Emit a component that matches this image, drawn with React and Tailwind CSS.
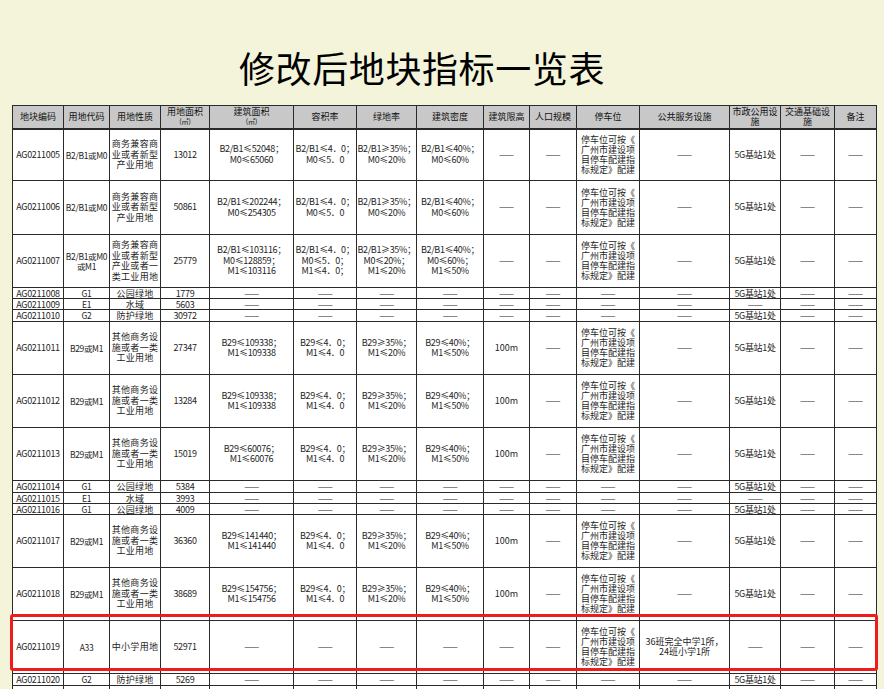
import React from "react";

const P = ["停车位可按《", "广州市建设项", "目停车配建指", "标规定》配建"];
const D = "——";

const cols = [51, 46, 51, 49, 84, 63, 60, 67, 46, 47, 63, 90, 51, 54, 42];

const headers = [
  ["地块编码"],
  ["用地代码"],
  ["用地性质"],
  ["用地面积", "(㎡)"],
  ["建筑面积", "(㎡)"],
  ["容积率"],
  ["绿地率"],
  ["建筑密度"],
  ["建筑限高"],
  ["人口规模"],
  ["停车位"],
  ["公共服务设施"],
  ["市政公用设", "施"],
  ["交通基础设", "施"],
  ["备注"],
];

const big = (id, code, nature, area, build, far, green, density, height, extra = {}) => ({
  id, code, nature, area, build, far, green, density, height,
  pop: D, parking: P, pub: D, muni: "5G基站1处", traffic: D, note: D, h: 53, ...extra,
});

const small = (id, code, nature, area, muni, h = 11) => ({
  id, code: [code], nature: [nature], area, build: [D], far: [D], green: [D], density: [D],
  height: D, pop: D, parking: [D], pub: D, muni, traffic: D, note: D, h, small: true,
});

const b29 = ["其他商务设", "施或者一类", "工业用地"];

const rows = [
  big("AG0211005", ["B2/B1或M0"], ["商务兼容商", "业或者新型", "产业用地"], "13012",
    ["B2/B1≤52048；", "M0≤65060"], ["B2/B1≤4．0；", "M0≤5．0"], ["B2/B1≥35%；", "M0≤20%"], ["B2/B1≤40%；", "M0≤60%"], D, { h: 52 }),
  big("AG0211006", ["B2/B1或M0"], ["商务兼容商", "业或者新型", "产业用地"], "50861",
    ["B2/B1≤202244；", "M0≤254305"], ["B2/B1≤4．0；", "M0≤5．0"], ["B2/B1≥35%；", "M0≤20%"], ["B2/B1≤40%；", "M0≤60%"], D, { h: 54 }),
  big("AG0211007", ["B2/B1或M0", "或M1"], ["商务兼容商", "业或者新型", "产业或者一", "类工业用地"], "25779",
    ["B2/B1≤103116；", "M0≤128859；", "M1≤103116"], ["B2/B1≤4．0；", "M0≤5．0；", "M1≤4．0；"],
    ["B2/B1≥35%；", "M0≤20%；", "M1≤20%"], ["B2/B1≤40%；", "M0≤60%；", "M1≤50%"], D),
  small("AG0211008", "G1", "公园绿地", "1779", "5G基站1处"),
  small("AG0211009", "E1", "水域", "5603", D),
  small("AG0211010", "G2", "防护绿地", "30972", "5G基站1处", 12),
  big("AG0211011", ["B29或M1"], b29, "27347", ["B29≤109338；", "M1≤109338"], ["B29≤4．0；", "M1≤4．0"], ["B29≥35%；", "M1≤20%"], ["B29≤40%；", "M1≤50%"], "100m"),
  big("AG0211012", ["B29或M1"], b29, "13284", ["B29≤109338；", "M1≤109338"], ["B29≤4．0；", "M1≤4．0"], ["B29≥35%；", "M1≤20%"], ["B29≤40%；", "M1≤50%"], "100m"),
  big("AG0211013", ["B29或M1"], b29, "15019", ["B29≤60076；", "M1≤60076"], ["B29≤4．0；", "M1≤4．0"], ["B29≥35%；", "M1≤20%"], ["B29≤40%；", "M1≤50%"], "100m"),
  small("AG0211014", "G1", "公园绿地", "5384", "5G基站1处", 12),
  small("AG0211015", "E1", "水域", "3993", D),
  small("AG0211016", "G1", "公园绿地", "4009", "5G基站1处"),
  big("AG0211017", ["B29或M1"], b29, "36360", ["B29≤141440；", "M1≤141440"], ["B29≤4．0；", "M1≤4．0"], ["B29≥35%；", "M1≤20%"], ["B29≤40%；", "M1≤50%"], "100m"),
  big("AG0211018", ["B29或M1"], b29, "38689", ["B29≤154756；", "M1≤154756"], ["B29≤4．0；", "M1≤4．0"], ["B29≥35%；", "M1≤20%"], ["B29≤40%；", "M1≤50%"], "100m"),
  big("AG0211019", ["A33"], ["中小学用地"], "52971", [D], [D], [D], [D], D,
    { pub: ["36班完全中学1所，", "24班小学1所"], muni: D, mark: true }),
  small("AG0211020", "G2", "防护绿地", "5269", "5G基站1处", 12),
];

function Lines({ items }) {
  const list = Array.isArray(items) ? items : [items];
  return list.map((t, i) => (
    <div key={i} className="whitespace-nowrap">
      {t}
    </div>
  ));
}

function Cell({ children, left = false, latin = false, className = "" }) {
  return (
    <td
      className={`border border-[#2a2a2a] p-0 align-middle ${left ? "text-left pl-[4px]" : "text-center"} ${
        latin ? "tracking-[-0.35px]" : ""
      } ${className}`}
    >
      {children}
    </td>
  );
}

export default function App() {
  return (
    <div
      className="w-[884px] h-[689px] overflow-hidden bg-[#f4f4da] text-[#1e1e1e]"
      style={{ fontFamily: '"Noto Sans CJK SC", "Noto Sans", sans-serif' }}
    >
      <div className="h-[105px] pt-[47px] pl-[239px] text-[36px] leading-[40px] tracking-[0.6px] text-black font-normal">
        修改后地块指标一览表
      </div>
      <div className="pl-[12px]">
        <table className="table-fixed border-collapse w-[864px] text-[9px] leading-[10.5px] bg-white">
          <colgroup>
            {cols.map((w, i) => (
              <col key={i} style={{ width: w }} />
            ))}
          </colgroup>
          <thead>
            <tr className="h-[23px] bg-[#c8c8c8]">
              {headers.map((h, i) => (
                <th
                  key={i}
                  className="border border-[#2a2a2a] border-b-[2px] p-0 font-normal text-[#111] leading-[10px] text-center align-middle"
                >
                  {h.map((t, j) => (
                    <div key={j} className={j === 1 && t.startsWith("(") ? "text-[7px] leading-[9px]" : ""}>
                      {t}
                    </div>
                  ))}
                </th>
              ))}
            </tr>
          </thead>
          <tbody>
            {rows.map((r) => (
              <tr key={r.id} style={{ height: r.h }} className={r.small ? "leading-[9px]" : ""}>
                <Cell latin className={r.mark ? "relative" : ""}>
                  {r.id}
                  {r.mark ? (
                    <div className="pointer-events-none absolute left-[-3px] top-[-7px] w-[868px] h-[57px] rounded-[3px] border-[3px] border-[#f01c1c]" />
                  ) : null}
                </Cell>
                <Cell latin className="text-[8.5px]">
                  <Lines items={r.code} />
                </Cell>
                <Cell className="tracking-[0.3px]">
                  <Lines items={r.nature} />
                </Cell>
                <Cell latin>{r.area}</Cell>
                <Cell latin>
                  <Lines items={r.build} />
                </Cell>
                <Cell latin>
                  <Lines items={r.far} />
                </Cell>
                <Cell latin>
                  <Lines items={r.green} />
                </Cell>
                <Cell latin>
                  <Lines items={r.density} />
                </Cell>
                <Cell>{r.height}</Cell>
                <Cell>{r.pop}</Cell>
                <Cell left={!r.small} className={r.small ? "" : "leading-[10px]"}>
                  <Lines items={r.parking} />
                </Cell>
                <Cell>
                  <Lines items={r.pub} />
                </Cell>
                <Cell latin>{r.muni}</Cell>
                <Cell>{r.traffic}</Cell>
                <Cell>{r.note}</Cell>
              </tr>
            ))}
            <tr className="h-[12px]">
              {cols.map((w, i) => (
                <Cell key={i} />
              ))}
            </tr>
          </tbody>
        </table>
      </div>
    </div>
  );
}
